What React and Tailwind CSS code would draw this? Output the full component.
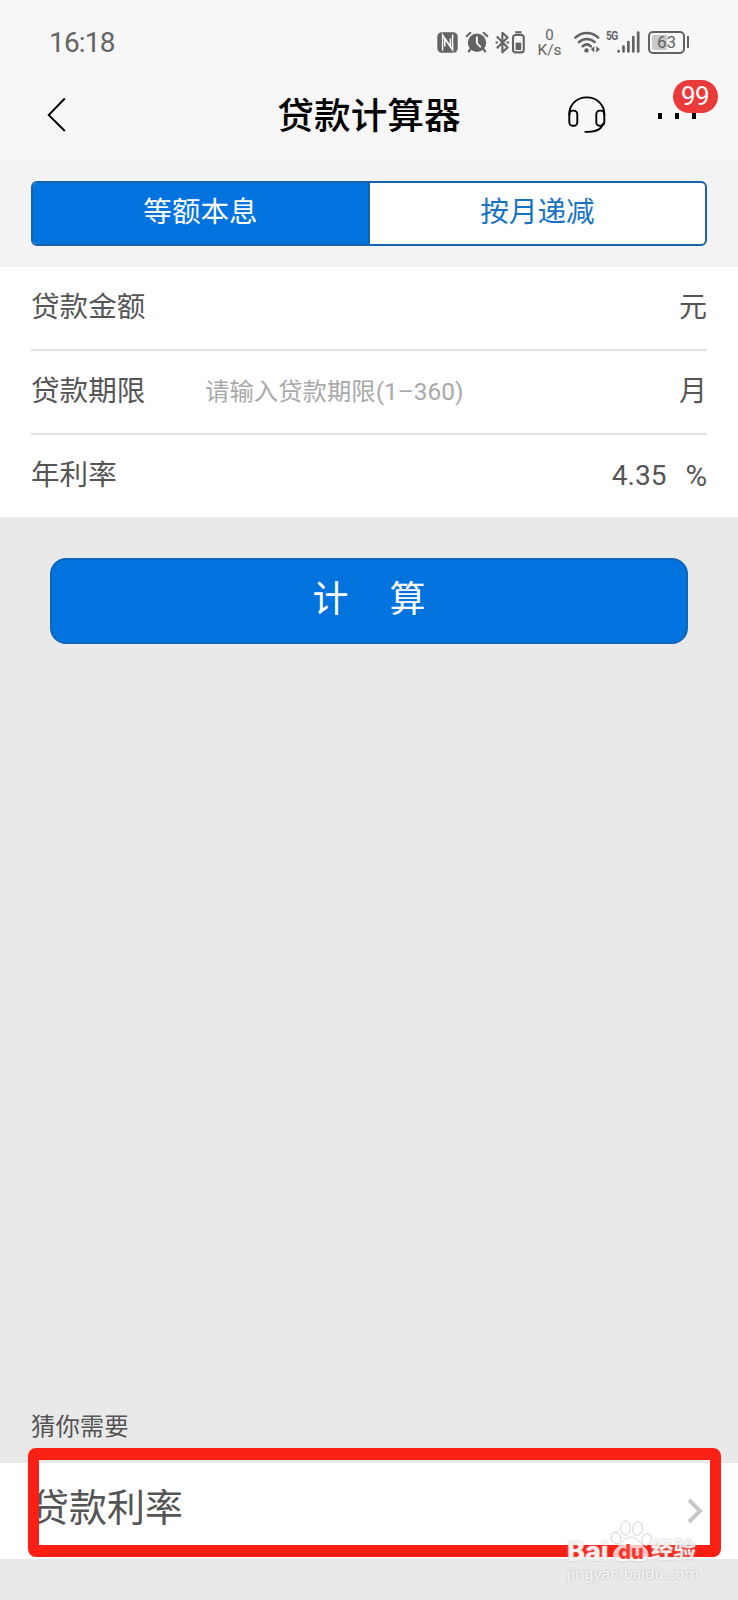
import React, { useState } from "react";

const tabs = [
  { key: "equal", label: "等额本息" },
  { key: "decrease", label: "按月递减" },
];

function NfcIcon() {
  return (
    <svg width="21" height="21" viewBox="0 0 21 21" className="shrink-0">
      <rect x="0.3" y="0.3" width="20.4" height="20.4" rx="4.5" fill="#636363" />
      <path d="M5.6 18.6V3.2L13.4 14.4V6.5" fill="none" stroke="#f7f7f7" strokeWidth="1.5" />
      <path d="M15.6 2.4V17.8L7.8 6.8V14.5" fill="none" stroke="#f7f7f7" strokeWidth="1.5" />
    </svg>
  );
}

function AlarmIcon() {
  return (
    <svg width="24" height="22" viewBox="0 0 24 22" className="shrink-0">
      <circle cx="12" cy="11.8" r="9.2" fill="#636363" />
      <path d="M5.8 17.5 3.8 20.4M18.2 17.5 20.2 20.4" stroke="#636363" strokeWidth="2.2" strokeLinecap="round" />
      <path d="M1.6 5.2 5.4 1.8M22.4 5.2 18.6 1.8" stroke="#636363" strokeWidth="2" strokeLinecap="round" />
      <path d="M11.9 6.2V12.2L15.2 15.6" fill="none" stroke="#f7f7f7" strokeWidth="2" strokeLinecap="round" />
    </svg>
  );
}

function BluetoothIcon() {
  return (
    <svg width="30" height="23" viewBox="0 0 30 23" className="shrink-0" fill="none" stroke="#636363">
      <path d="M1.8 5.6 12.6 16.4 7.4 21.3V1.7L12.6 6.6 1.8 17.2" strokeWidth="2.1" strokeLinejoin="round" />
      <path d="M0.6 11.5H3M11.6 11.5H14" strokeWidth="2.2" />
      <rect x="18" y="4" width="10.8" height="17.4" rx="2.6" strokeWidth="2.1" />
      <path d="M20.2 1.3H26.6" strokeWidth="2.2" />
      <rect x="20.6" y="11.6" width="5.6" height="7.4" fill="#636363" stroke="none" />
    </svg>
  );
}

function WifiIcon() {
  return (
    <svg width="27" height="22" viewBox="0 0 27 22" className="shrink-0" fill="none" stroke="#636363" strokeLinecap="round">
      <path d="M1.4 6.6C8 .4 17.6 .4 24.2 6.6" strokeWidth="2.5" />
      <path d="M4.9 11.2C9.5 6.8 16.1 6.8 20.7 11.2" strokeWidth="2.5" />
      <path d="M8.6 15.4C11.2 12.9 14.4 12.9 17 15.4" strokeWidth="2.5" />
      <circle cx="12.5" cy="19.4" r="2.2" fill="#636363" stroke="none" />
      <path d="M20.3 15.2V21.6L16.8 18.3ZM22.2 15.2V21.6L26 18.3Z" fill="#636363" stroke="none" />
    </svg>
  );
}

function SignalIcon() {
  return (
    <svg width="23" height="22" viewBox="0 0 23 22" className="shrink-0" stroke="#636363" strokeWidth="2.7" strokeLinecap="round">
      <path d="M1.6 20.2V20.4M6.5 15.6V20.4M11.4 11V20.4M16.3 6.2V20.4M21.2 1.6V20.4" />
    </svg>
  );
}

function HeadsetIcon() {
  return (
    <svg width="40" height="38" viewBox="0 0 40 38" fill="none" stroke="#000" strokeWidth="1.9" strokeLinecap="round">
      <path d="M2.3 19C1.8 8 10.4 1.4 19.8 1.4S37.8 8 37.3 19" />
      <rect x="2.3" y="14.6" width="8" height="15.2" rx="3.6" />
      <rect x="29.3" y="14.6" width="8" height="15.2" rx="3.6" />
      <path d="M35.8 28C34.4 33.6 28.8 36.2 18.3 35.9" />
    </svg>
  );
}

function StatusBar() {
  return (
    <div className="flex h-[84px] items-center pl-[49px] pr-[49px] text-[#636363]">
      <span className="pt-[2px] text-[28px] tracking-[-0.8px]">16:18</span>
      <div className="ml-auto flex items-center">
        <NfcIcon />
        <div className="ml-[7px] flex"><AlarmIcon /></div>
        <div className="ml-[6px] flex"><BluetoothIcon /></div>
        <div className="ml-[12px] flex w-[25px] flex-col items-center pt-px">
          <span className="h-[15px] text-[15px] leading-[15px]">0</span>
          <span className="h-[15px] text-[15.5px] leading-[15px]">K/s</span>
        </div>
        <div className="ml-[12px] flex"><WifiIcon /></div>
        <span className="mb-[12px] ml-[5px] w-[11px] origin-left scale-x-[0.85] text-[12px] font-bold leading-none tracking-[-0.8px]">5G</span>
        <SignalIcon />
        <div className="ml-[8px] flex h-[23px] w-[37px] items-center rounded-[5px] border-2 border-[#636363] p-[2px]">
          <div className="flex h-full w-[15px] items-center rounded-l-[2px] bg-[#c9c9c9]">
            <span className="pl-[5px] text-[17px] leading-none">63</span>
          </div>
        </div>
        <div className="ml-[2px] h-[12px] w-[2px] bg-[#636363]" />
      </div>
    </div>
  );
}

function NavBar() {
  return (
    <div className="grid h-[76px] grid-cols-[1fr_auto_1fr] items-start">
      <button className="ml-[47px] mt-[13px] w-fit">
        <svg width="20" height="36" viewBox="0 0 20 36" fill="none" stroke="#000" strokeWidth="1.9">
          <path d="M17.8 1.5 1.7 18 17.8 34" />
        </svg>
      </button>
      <h1 className="mt-[8px] text-[36.7px] font-medium leading-[50px] text-black">贷款计算器</h1>
      <div className="flex justify-end">
        <div className="mt-[12px]"><HeadsetIcon /></div>
        <div className="relative ml-[51px] mr-[42px] mt-[29px] flex h-[6px] w-[38px] justify-between">
          <i className="h-[6px] w-[4px] bg-black" />
          <i className="h-[6px] w-[4px] bg-black" />
          <i className="h-[6px] w-[4px] bg-black" />
          <span className="absolute -top-[33px] left-[15px] flex h-[33px] w-[45px] items-center justify-center rounded-full bg-[#eb3a3a] pb-[1px] pr-[1px] text-[26px] leading-none tracking-[-0.5px] text-white">
            99
          </span>
        </div>
      </div>
    </div>
  );
}

function Row({ label, unit, last, children }) {
  return (
    <div className={last ? "flex h-[82px] items-center" : "flex h-[84px] items-center border-b-2 border-[#dfdfdf]"}>
      <span className="w-[174px] pb-[2px] text-[28.6px]">{label}</span>
      {children}
      <span className={last ? "ml-[19px] text-[29.5px]" : "ml-auto pb-[1px] text-[28px]"}>{unit}</span>
    </div>
  );
}

function Watermark() {
  return (
    <div className="absolute right-[39px] top-[54px] w-[132px]">
      <svg width="42" height="46" viewBox="0 0 42 46" className="absolute left-[43px] top-[2px]" fill="#fff" fillOpacity="0.75" stroke="#d0d0d0" strokeWidth="0.9">
        <ellipse cx="6" cy="19" rx="4.7" ry="6" transform="rotate(-18 6 19)" />
        <ellipse cx="15.5" cy="9" rx="4.8" ry="7" />
        <ellipse cx="27.5" cy="9.5" rx="4.8" ry="7" transform="rotate(8 27.5 9.5)" />
        <ellipse cx="36.5" cy="20.5" rx="4.7" ry="6" transform="rotate(18 36.5 20.5)" />
        <path d="M21 18C14 18 12 25 7 29C1 34 3 43 11 43C16 43 17 42 21 42S27 43 32 43C39 43 40 34 35 29C30 25 28 18 21 18Z" />
      </svg>
      <div className="relative flex h-[46px] items-end">
        <span className="w-[44px] font-['Inter','Liberation_Sans',sans-serif] text-[27px] font-extrabold leading-[23px] text-white/80 [text-shadow:0_0_2px_#b8b8b8]">Bai</span>
        <span className="w-[40px] text-center font-['Inter','Liberation_Sans',sans-serif] text-[20px] font-extrabold leading-[22px] text-[#fa3a30]">du</span>
        <span className="text-[22.5px] font-bold leading-[26px] text-white/80 [text-shadow:0_0_2px_#b8b8b8]">经验</span>
      </div>
      <div className="font-['Noto_Sans',sans-serif] text-[15px] leading-[20px] tracking-[0.1px] text-white/90 [text-shadow:0_0_2px_#a8a8a8]">jingyan.baidu.com</div>
    </div>
  );
}

export default function App() {
  const [active, setActive] = useState("equal");

  return (
    <div className="flex h-[1600px] w-[738px] flex-col overflow-hidden bg-[#e9e9e9] font-[Roboto,'Noto_Sans_CJK_SC',sans-serif] text-[#555]">
      {/* Header */}
      <header className="bg-[#f7f7f7]">
        <StatusBar />
        <NavBar />
      </header>

      {/* Repayment type */}
      <div className="h-[107px] bg-[#f3f3f3] px-[31px] pt-[21px]">
        <div className="flex h-[65px] overflow-hidden rounded-[6px] border-2 border-[#1663a8] bg-white">
          {tabs.map((tab) => (
            <button
              key={tab.key}
              onClick={() => setActive(tab.key)}
              className={`flex-1 pb-[2px] text-[28.6px] ${
                active === tab.key ? "border-r-2 border-[#1663a8] bg-[#0073df] text-white" : "text-[#1673c4]"
              }`}
            >
              {tab.label}
            </button>
          ))}
        </div>
      </div>

      {/* Loan form */}
      <div className="bg-white px-[31px]">
        <Row label="贷款金额" unit="元" />
        <Row label="贷款期限" unit="月">
          <span className="text-[24.4px] text-[#a9a9a9]">请输入贷款期限(1–360)</span>
        </Row>
        <Row label="年利率" unit="%" last>
          <span className="ml-auto text-[28px]">4.35</span>
        </Row>
      </div>

      <button className="mx-[50px] mt-[41px] flex h-[86px] shrink-0 justify-center gap-[41px] rounded-[16px] border-2 border-[#0e66b8] bg-[#0073df] pt-[13px] text-[36px] leading-[54px] text-white">
        <span>计</span>
        <span>算</span>
      </button>

      {/* Suggestions */}
      <div className="mt-auto">
        <p className="h-[54px] pl-[31px] text-[24.4px] leading-[36px]">猜你需要</p>
        <div className="relative mb-[41px] flex h-[96px] items-center justify-between bg-white pl-[31px] pr-[35px]">
          <span className="pb-[6px] text-[38px]">贷款利率</span>
          <svg width="16" height="26" viewBox="0 0 16 26" fill="none" stroke="#c7c7c7" strokeWidth="4">
            <path d="M2 2 13 13 2 24" />
          </svg>
          <div className="absolute -top-[15px] left-[28px] h-[109px] w-[693px] rounded-[8px] border-x-[11px] border-y-[12px] border-[#fc1f13]" />
          <Watermark />
        </div>
      </div>
    </div>
  );
}
